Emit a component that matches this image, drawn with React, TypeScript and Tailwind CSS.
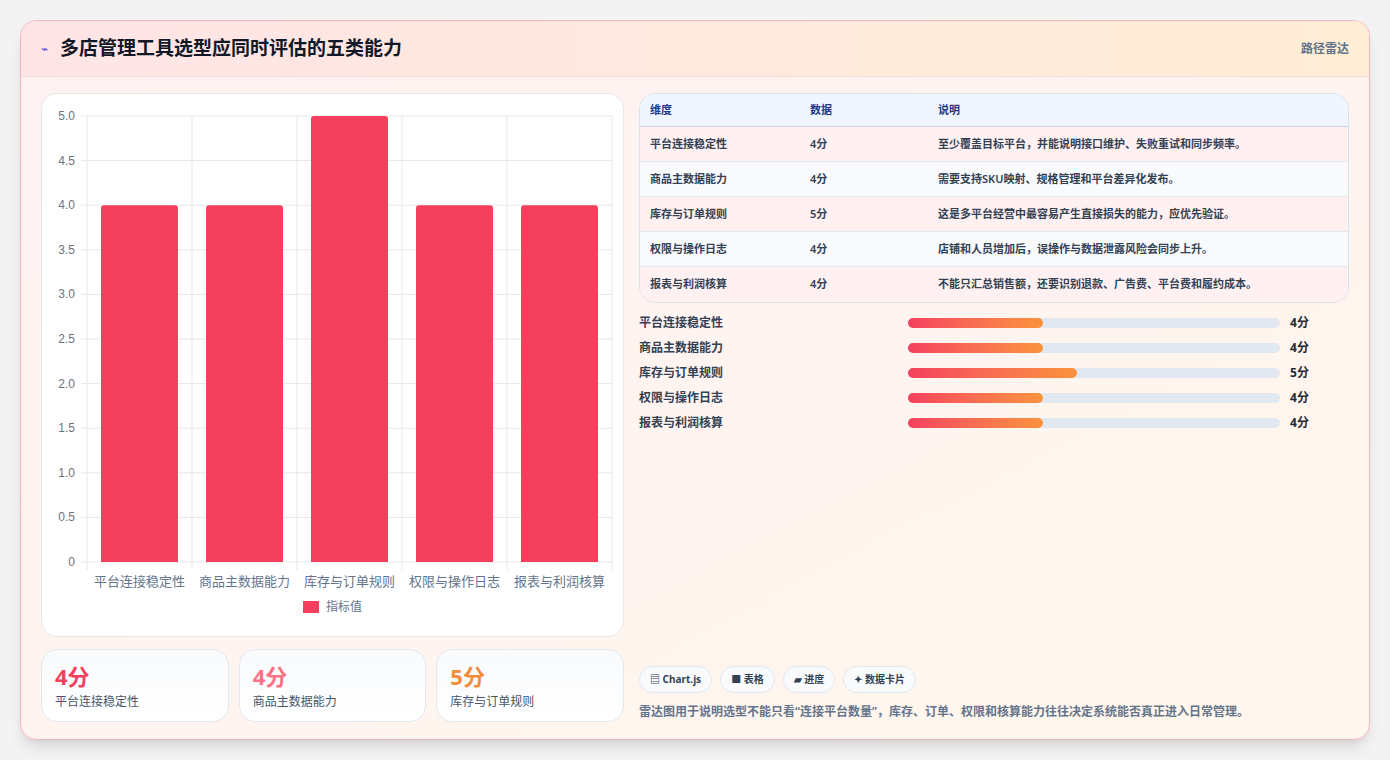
import React from "react";

const rows = [
  { name: "平台连接稳定性", score: 4, desc: "至少覆盖目标平台，并能说明接口维护、失败重试和同步频率。" },
  { name: "商品主数据能力", score: 4, desc: "需要支持SKU映射、规格管理和平台差异化发布。" },
  { name: "库存与订单规则", score: 5, desc: "这是多平台经营中最容易产生直接损失的能力，应优先验证。" },
  { name: "权限与操作日志", score: 4, desc: "店铺和人员增加后，误操作与数据泄露风险会同步上升。" },
  { name: "报表与利润核算", score: 4, desc: "不能只汇总销售额，还要识别退款、广告费、平台费和履约成本。" },
];

const font = { fontFamily: '"Noto Sans", "Noto Sans CJK SC", sans-serif' };

function BarChart() {
  const x0 = 45, x1 = 570, yTop = 22, yBot = 468;
  const ticks = [0, 0.5, 1, 1.5, 2, 2.5, 3, 3.5, 4, 4.5, 5];
  const cw = (x1 - x0) / 5;
  const y = (v: number) => yBot - (v / 5) * (yBot - yTop);
  return (
    <svg width="582" height="543" className="block">
      {ticks.map((t) => (
        <g key={t}>
          <line x1={x0 - 6} x2={x1} y1={y(t)} y2={y(t)} stroke="#e5e7eb" />
          <text x={x0 - 12} y={y(t) + 4} textAnchor="end" fontSize="12" fill="#6b7280" fontFamily="Liberation Sans, sans-serif">
            {t === 0 ? "0" : t.toFixed(1)}
          </text>
        </g>
      ))}
      {[0, 1, 2, 3, 4, 5].map((i) => (
        <line key={i} x1={x0 + i * cw} x2={x0 + i * cw} y1={yTop} y2={yBot + 8} stroke="#e5e7eb" />
      ))}
      {rows.map((r, i) => (
        <g key={r.name}>
          <path
            d={`M${x0 + i * cw + 14} ${yBot} V${y(r.score) + 3} q0 -3 3 -3 H${x0 + i * cw + cw - 17} q3 0 3 3 V${yBot} Z`}
            fill="#f43f5e"
          />
          <text x={x0 + i * cw + cw / 2} y={yBot + 24} textAnchor="middle" fontSize="13" fill="#64748b" style={font}>
            {r.name}
          </text>
        </g>
      ))}
      <rect x="261" y="507" width="16" height="12" fill="#f43f5e" />
      <text x="284" y="517" fontSize="12" fill="#64748b" style={font}>指标值</text>
    </svg>
  );
}

export default function App() {
  return (
    <div className="min-h-screen bg-[#f3f3f3] p-5 pt-5" style={font}>
      <div className="h-[720px] overflow-hidden rounded-2xl border border-[#f2b8c0] bg-gradient-to-br from-[#fff1f2] to-[#fff7ed] shadow-lg">
        <div className="flex h-14 items-center justify-between border-b border-[#f5dada] bg-gradient-to-r from-[#ffe4e6] to-[#ffedd5] px-5">
          <div className="flex items-center gap-3">
            <span className="text-xs text-[#4f46e5]">⌁</span>
            <h1 className="text-[19px] font-bold text-[#111827]">多店管理工具选型应同时评估的五类能力</h1>
          </div>
          <span className="text-xs font-semibold text-[#64748b]">路径雷达</span>
        </div>
        <div className="flex gap-[15px] px-5 pt-4">
          <div className="flex w-[583px] flex-col gap-3">
            <div className="h-[544px] rounded-2xl border border-[#e5e7eb] bg-white">
              <BarChart />
            </div>
            <div className="grid grid-cols-3 gap-[10px]">
              {[
                { v: "4分", l: "平台连接稳定性", c: "text-[#f43f5e]" },
                { v: "4分", l: "商品主数据能力", c: "text-[#fb7185]" },
                { v: "5分", l: "库存与订单规则", c: "text-[#f28c38]" },
              ].map((s) => (
                <div key={s.l} className="h-[73px] rounded-2xl border border-[#e2e8f0] bg-gradient-to-b from-[#f8fafc] to-white px-[13px] pt-3">
                  <div className={`text-[22px] font-bold leading-7 ${s.c}`}>{s.v}</div>
                  <div className="mt-1 text-xs text-[#475569]">{s.l}</div>
                </div>
              ))}
            </div>
          </div>
          <div className="flex w-[714px] flex-col">
            <div className="overflow-hidden rounded-2xl border border-[#dbe2ea] text-[11px]">
              <div className="flex h-[33px] items-center border-b border-[#cbd5e1] bg-[#eff6ff] font-bold text-[#1e3a8a]">
                <div className="w-[170px] pl-[10px]">维度</div>
                <div className="w-[128px]">数据</div>
                <div>说明</div>
              </div>
              {rows.map((r, i) => (
                <div key={r.name} className={`flex h-[35px] items-center font-semibold text-[#334155] ${i < 4 ? "border-b border-[#e2e8f0]" : ""} ${i % 2 === 0 ? "bg-[#fff1f2]" : "bg-[#f8fafc]"}`}>
                  <div className="w-[170px] pl-[10px]">{r.name}</div>
                  <div className="w-[128px]">{r.score}分</div>
                  <div>{r.desc}</div>
                </div>
              ))}
            </div>
            <div className="mt-[13px] flex flex-col gap-[11px]">
              {rows.map((r) => (
                <div key={r.name} className="flex h-[14px] items-center text-xs font-semibold text-[#334155]">
                  <div className="w-[269px]">{r.name}</div>
                  <div className="h-[10px] w-[372px] rounded-full bg-[#e2e8f0]">
                    <div className="h-full rounded-full bg-gradient-to-r from-[#f43f5e] to-[#fb923c]" style={{ width: r.score === 5 ? "45.5%" : "36.3%" }} />
                  </div>
                  <div className="ml-[10px] font-bold text-[#1f2937]">{r.score}分</div>
                </div>
              ))}
            </div>
            <div className="mt-auto mb-[2px] flex flex-col gap-[11px] pt-[230px]">
              <div className="flex gap-2">
                {["▤ Chart.js", "■ 表格", "▰ 进度", "✦ 数据卡片"].map((c) => (
                  <span key={c} className="rounded-full border border-[#e2e8f0] bg-[#f8fafc] px-[10px] py-[5px] text-[10px] font-bold text-[#334155]">{c}</span>
                ))}
              </div>
              <p className="text-xs font-semibold text-[#64748b]">雷达图用于说明选型不能只看“连接平台数量”，库存、订单、权限和核算能力往往决定系统能否真正进入日常管理。</p>
            </div>
          </div>
        </div>
      </div>
    </div>
  );
}
